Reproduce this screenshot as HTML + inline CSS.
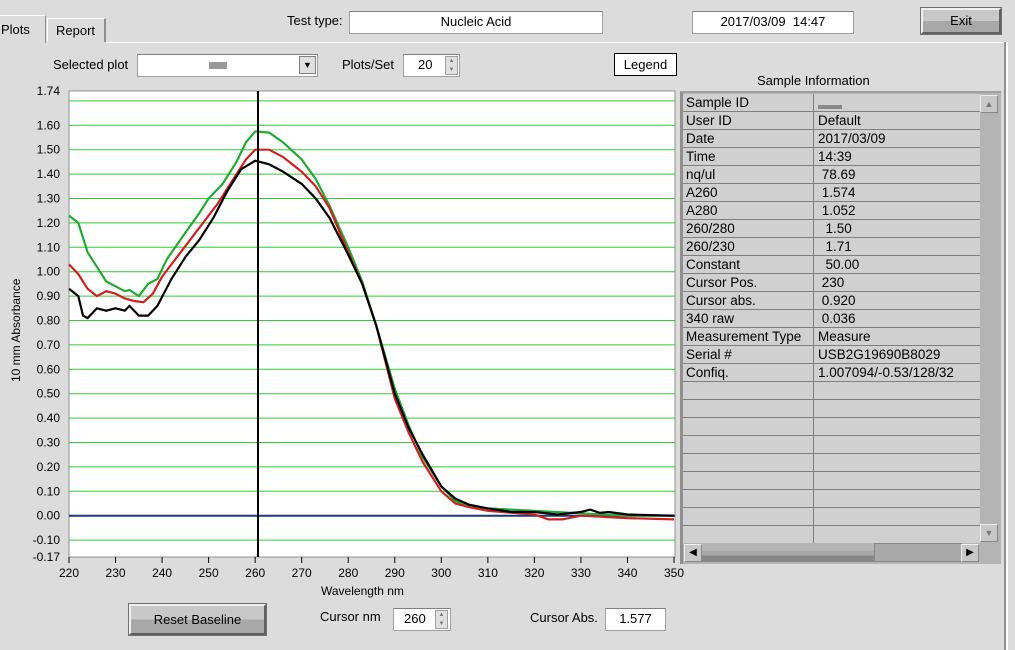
<!DOCTYPE html>
<html><head><meta charset="utf-8">
<style>
*{box-sizing:border-box}
body{margin:0;width:1015px;height:650px;background:#dcdcdc;font-family:"Liberation Sans",sans-serif;font-size:13px;color:#000;position:relative;overflow:hidden}
.a{position:absolute}
.box{position:absolute;background:#fff;border:1px solid #a0a0a0;border-top-color:#808080;text-align:center;line-height:20px}
.btn{position:absolute;background:linear-gradient(#c8c8c8 0%,#c8c8c8 50%,#a8a8a8 50%,#a8a8a8 100%);border:2px solid;border-color:#f0f0f0 #606060 #606060 #f0f0f0;outline:1px solid #707070;text-align:center}
.tbl{position:absolute;left:683px;top:94px;width:297px}
.row{height:18px;border-bottom:1px solid #808080;display:flex;background:#d0d0d0;font-size:13.5px;line-height:17px}
.row div:first-child{width:131px;border-right:1px solid #808080;padding-left:3px}
.row div:last-child{padding-left:4px}
.spin{position:absolute;width:13px;border:1px solid #a0a0a0;background:#e0e0e0}
</style></head><body>
<div class="a" style="left:0;top:15px;width:46px;height:28px;border-right:1px solid #909090;border-top:1px solid #fff;padding:6px 0 0 1px">Plots</div>
<div class="a" style="left:47px;top:18px;width:59px;height:24px;border-top:1px solid #fff;border-left:1px solid #fff;border-right:2px solid #909090;padding:4px 0 0 8px">Report</div>
<div class="a" style="left:106px;top:42px;width:900px;height:1px;background:#fff"></div>
<div class="a" style="left:1004px;top:42px;width:2px;height:608px;background:#909090"></div>
<div class="a" style="left:1006px;top:42px;width:2px;height:608px;background:#fff"></div>

<div class="a" style="left:287px;top:13px">Test type:</div>
<div class="box" style="left:349px;top:11px;width:254px;height:23px">Nucleic Acid</div>
<div class="box" style="left:692px;top:11px;width:162px;height:23px">2017/03/09&nbsp; 14:47</div>
<div class="btn" style="left:921px;top:8px;width:80px;height:26px;line-height:22px">Exit</div>

<div class="a" style="left:53px;top:57px">Selected plot</div>
<div class="box" style="left:137px;top:54px;width:181px;height:23px"><span style="display:inline-block;width:18px;height:7px;background:#999;margin-left:-20px"></span></div>
<div class="a" style="left:299px;top:56px;width:17px;height:18px;border:1px solid #808080;background:#e0e0e0;text-align:center;font-size:9px;line-height:16px">▼</div>
<div class="a" style="left:342px;top:57px">Plots/Set</div>
<div class="box" style="left:403px;top:54px;width:57px;height:23px;text-align:left;padding-left:14px">20</div>
<div class="spin" style="left:445px;top:56px;height:19px;font-size:6px;line-height:9px;text-align:center;color:#777">▲<br>▼</div>
<div class="a" style="left:614px;top:53px;width:63px;height:23px;border:1px solid #000;background:#fff;text-align:center;line-height:22px">Legend</div>
<div class="a" style="left:757px;top:73px">Sample Information</div>

<svg class="a" style="left:0;top:0" width="690" height="610" id="ch" font-family="Liberation Sans" font-size="12"></svg>
<div class="a" style="left:18px;top:326px;transform:rotate(-90deg);transform-origin:0 0;white-space:nowrap;font-size:12px;width:0">
<span style="position:absolute;left:-56px;top:-9px">10 mm Absorbance</span></div>
<div class="a" style="left:321px;top:584px;font-size:12px">Wavelength nm</div>

<div class="a" style="left:680px;top:91px;width:321px;height:473px;background:#b4b4b4;border-top:2px solid #a0a0a0;border-left:3px solid #909090"></div>
<div class="tbl">
<div class="row"><div>Sample ID</div><div><span style="display:inline-block;width:24px;height:4px;background:#888;margin-top:11px"></span></div></div>
<div class="row"><div>User ID</div><div>Default</div></div>
<div class="row"><div>Date</div><div>2017/03/09</div></div>
<div class="row"><div>Time</div><div>14:39</div></div>
<div class="row"><div>nq/ul</div><div>&nbsp;78.69</div></div>
<div class="row"><div>A260</div><div>&nbsp;1.574</div></div>
<div class="row"><div>A280</div><div>&nbsp;1.052</div></div>
<div class="row"><div>260/280</div><div>&nbsp; 1.50</div></div>
<div class="row"><div>260/230</div><div>&nbsp; 1.71</div></div>
<div class="row"><div>Constant</div><div>&nbsp; 50.00</div></div>
<div class="row"><div>Cursor Pos.</div><div>&nbsp;230</div></div>
<div class="row"><div>Cursor abs.</div><div>&nbsp;0.920</div></div>
<div class="row"><div>340 raw</div><div>&nbsp;0.036</div></div>
<div class="row"><div>Measurement Type</div><div>Measure</div></div>
<div class="row"><div>Serial #</div><div>USB2G19690B8029</div></div>
<div class="row"><div>Confiq.</div><div>1.007094/-0.53/128/32</div></div>
<div class="row"><div></div><div></div></div>
<div class="row"><div></div><div></div></div>
<div class="row"><div></div><div></div></div>
<div class="row"><div></div><div></div></div>
<div class="row"><div></div><div></div></div>
<div class="row"><div></div><div></div></div>
<div class="row"><div></div><div></div></div>
<div class="row"><div></div><div></div></div>
<div class="row" style="border-bottom:none"><div></div><div></div></div>
</div>
<div class="a" style="left:980px;top:95px;width:18px;height:18px;background:#c8c8c8;border:1px solid;border-color:#eee #888 #888 #eee;font-size:9px;text-align:center;line-height:16px;color:#777">▲</div>
<div class="a" style="left:980px;top:524px;width:18px;height:18px;background:#c8c8c8;border:1px solid;border-color:#eee #888 #888 #eee;font-size:9px;text-align:center;line-height:16px;color:#777">▼</div>
<div class="a" style="left:684px;top:543px;width:296px;height:19px;background:#b4b4b4"></div>
<div class="a" style="left:684px;top:544px;width:18px;height:18px;background:#c8c8c8;border:1px solid;border-color:#eee #888 #888 #eee;font-size:10px;text-align:center;line-height:16px">◀</div>
<div class="a" style="left:702px;top:551px;width:172px;height:11px;background:linear-gradient(#a8a8a8 40%,#888 40%)"></div>
<div class="a" style="left:874px;top:543px;width:88px;height:19px;background:#a8a8a8;border:1px solid #888"></div>
<div class="a" style="left:961px;top:544px;width:18px;height:18px;background:#c8c8c8;border:1px solid;border-color:#eee #888 #888 #eee;font-size:10px;text-align:center;line-height:16px">▶</div>

<div class="btn" style="left:129px;top:604px;width:137px;height:31px;line-height:27px">Reset Baseline</div>
<div class="a" style="left:320px;top:609px">Cursor nm</div>
<div class="box" style="left:393px;top:608px;width:58px;height:23px;text-align:left;padding-left:10px">260</div>
<div class="spin" style="left:435px;top:610px;height:19px;font-size:6px;line-height:9px;text-align:center;color:#777">▲<br>▼</div>
<div class="a" style="left:530px;top:610px">Cursor Abs.</div>
<div class="box" style="left:605px;top:608px;width:61px;height:23px">1.577</div>

<script>
var s=document.getElementById('ch'),h='';
function X(n){return 69+(n-220)*4.654}
function Y(a){return 515.7-a*244}
h+='<rect x="69" y="91" width="606" height="466" fill="#fff" stroke="#909090"/>';
for(var i=-1;i<=17;i++){var y=Y(i/10);h+='<line x1="69" x2="675" y1="'+y+'" y2="'+y+'" stroke="#33cc33" stroke-width="1"/>';}
var labs=[[1.74,'1.74']];for(i=16;i>=-1;i--)labs.push([i/10,(i/10).toFixed(2)]);labs.push([-0.17,'-0.17']);
labs.forEach(function(l){h+='<text x="60" y="'+(Y(l[0])+4)+'" text-anchor="end">'+l[1]+'</text>'});
for(i=220;i<=350;i+=10){var x=X(i);h+='<line x1="'+x+'" x2="'+x+'" y1="557" y2="563" stroke="#000"/><text x="'+x+'" y="577" text-anchor="middle">'+i+'</text>';}
h+='<line x1="69" x2="675" y1="'+Y(0)+'" y2="'+Y(0)+'" stroke="#1a3a7a" stroke-width="2"/>';
function P(d,c){var p=d.map(function(q){return X(q[0]).toFixed(1)+','+Y(q[1]).toFixed(1)}).join(' ');h+='<polyline points="'+p+'" fill="none" stroke="'+c+'" stroke-width="2.2"/>';}
P([[220,1.23],[222,1.2],[224,1.08],[226,1.02],[228,0.96],[230,0.94],[232,0.92],[233,0.925],[235,0.9],[237,0.95],[239,0.97],[241,1.05],[245,1.16],[248,1.24],[250,1.3],[253,1.36],[256,1.45],[258,1.53],[260,1.575],[263,1.57],[266,1.53],[270,1.46],[273,1.38],[276,1.27],[280,1.1],[283,0.96],[286,0.78],[290,0.52],[293,0.37],[296,0.24],[300,0.12],[303,0.06],[306,0.04],[310,0.03],[320,0.02],[330,0.01],[340,0.0],[350,0.0]],'#22aa33');
P([[220,1.03],[222,0.99],[224,0.93],[226,0.9],[228,0.92],[230,0.91],[232,0.89],[234,0.88],[236,0.875],[238,0.91],[240,0.98],[244,1.08],[248,1.18],[252,1.28],[255,1.37],[258,1.46],[260,1.50],[263,1.5],[266,1.47],[270,1.41],[273,1.35],[276,1.26],[280,1.08],[283,0.95],[286,0.78],[290,0.48],[293,0.34],[296,0.22],[300,0.1],[303,0.05],[306,0.035],[310,0.02],[320,0.005],[323,-0.015],[326,-0.015],[330,0.0],[340,-0.01],[350,-0.015]],'#cc2222');
P([[220,0.93],[222,0.9],[223,0.82],[224,0.81],[226,0.85],[228,0.84],[230,0.85],[232,0.84],[233,0.86],[235,0.82],[237,0.82],[239,0.86],[242,0.97],[245,1.06],[248,1.13],[251,1.22],[254,1.33],[257,1.42],[260,1.455],[263,1.44],[266,1.41],[270,1.36],[273,1.3],[276,1.22],[280,1.07],[283,0.95],[286,0.78],[290,0.5],[293,0.36],[296,0.25],[300,0.12],[303,0.07],[306,0.045],[310,0.03],[315,0.015],[320,0.015],[325,0.005],[330,0.015],[332,0.025],[334,0.012],[336,0.015],[340,0.005],[350,0.0]],'#000');
h+='<line x1="258" x2="258" y1="91" y2="557" stroke="#000" stroke-width="2"/>';
s.innerHTML=h;
</script>
</body></html>
